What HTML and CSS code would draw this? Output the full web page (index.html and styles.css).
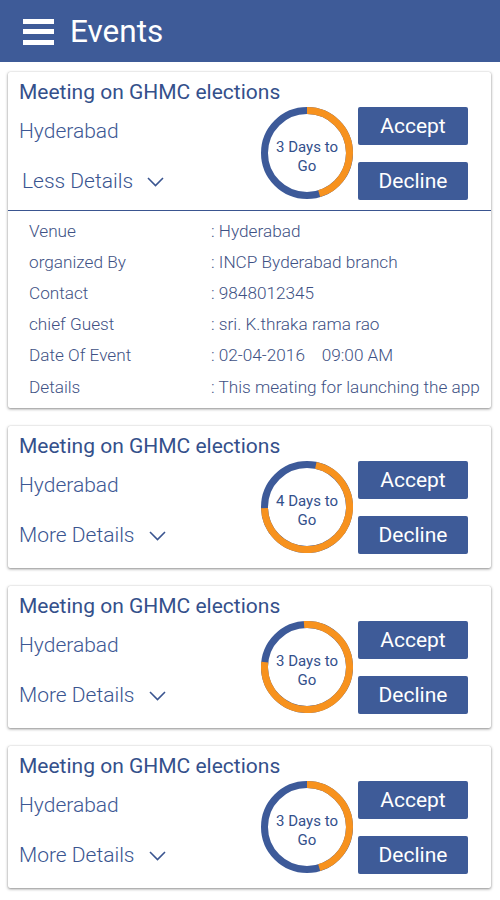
FILE: index.html
```html
<!DOCTYPE html>
<html>
<head>
<meta charset="utf-8">
<link rel="stylesheet" href="styles.css">
</head>
<body>
<header class="appbar">
  <span class="hamburger"><span></span><span></span><span></span></span>
  <h1 class="appbar-title">Events</h1>
</header>
<main class="list">
  <section class="card">
    <div class="card-top expanded">
      <h2 class="card-title">Meeting on GHMC elections</h2>
      <div class="card-body">
        <div class="card-left">
          <div class="city">Hyderabad</div>
          <div class="toggle less">Less Details
            <svg class="chev" width="17" height="10" viewBox="0 0 17 10"><path d="M1 1 L8.5 8.5 L16 1" fill="none" stroke="#3a5590" stroke-width="1.6"/></svg>
          </div>
        </div>
        <div class="ring">
          <svg width="92" height="92" viewBox="0 0 92 92">
            <circle cx="46" cy="46" r="42.5" fill="none" stroke="#3d5a99" stroke-width="7"/>
            <circle cx="46" cy="46" r="42.5" fill="none" stroke="#f7921e" stroke-width="7" stroke-dasharray="120.9 400" transform="rotate(-90 46 46)"/>
          </svg>
          <span class="ring-text">3 Days to<br>Go</span>
        </div>
        <div class="actions">
          <button class="btn">Accept</button>
          <button class="btn">Decline</button>
        </div>
      </div>
    </div>
    <dl class="details">
      <div class="row"><dt>Venue</dt><dd>: Hyderabad</dd></div>
      <div class="row"><dt>organized By</dt><dd>: INCP Byderabad branch</dd></div>
      <div class="row"><dt>Contact</dt><dd>: 9848012345</dd></div>
      <div class="row"><dt>chief Guest</dt><dd>: sri. K.thraka rama rao</dd></div>
      <div class="row"><dt>Date Of Event</dt><dd>: 02-04-2016&nbsp;&nbsp;&nbsp; 09:00 AM</dd></div>
      <div class="row"><dt>Details</dt><dd>: This meating for launching the app</dd></div>
    </dl>
  </section>

  <section class="card">
    <div class="card-top">
      <h2 class="card-title">Meeting on GHMC elections</h2>
      <div class="card-body">
        <div class="card-left">
          <div class="city">Hyderabad</div>
          <div class="toggle">More Details
            <svg class="chev" width="17" height="10" viewBox="0 0 17 10"><path d="M1 1 L8.5 8.5 L16 1" fill="none" stroke="#3a5590" stroke-width="1.6"/></svg>
          </div>
        </div>
        <div class="ring">
          <svg width="92" height="92" viewBox="0 0 92 92">
            <circle cx="46" cy="46" r="42.5" fill="none" stroke="#3d5a99" stroke-width="7"/>
            <circle cx="46" cy="46" r="42.5" fill="none" stroke="#f7921e" stroke-width="7" stroke-dasharray="189.9 400" transform="rotate(-78 46 46)"/>
          </svg>
          <span class="ring-text">4 Days to<br>Go</span>
        </div>
        <div class="actions">
          <button class="btn">Accept</button>
          <button class="btn">Decline</button>
        </div>
      </div>
    </div>
  </section>

  <section class="card">
    <div class="card-top">
      <h2 class="card-title">Meeting on GHMC elections</h2>
      <div class="card-body">
        <div class="card-left">
          <div class="city">Hyderabad</div>
          <div class="toggle">More Details
            <svg class="chev" width="17" height="10" viewBox="0 0 17 10"><path d="M1 1 L8.5 8.5 L16 1" fill="none" stroke="#3a5590" stroke-width="1.6"/></svg>
          </div>
        </div>
        <div class="ring">
          <svg width="92" height="92" viewBox="0 0 92 92">
            <circle cx="46" cy="46" r="42.5" fill="none" stroke="#3d5a99" stroke-width="7"/>
            <circle cx="46" cy="46" r="42.5" fill="none" stroke="#f7921e" stroke-width="7" stroke-dasharray="207.7 400" transform="rotate(-94 46 46)"/>
          </svg>
          <span class="ring-text">3 Days to<br>Go</span>
        </div>
        <div class="actions">
          <button class="btn">Accept</button>
          <button class="btn">Decline</button>
        </div>
      </div>
    </div>
  </section>

  <section class="card">
    <div class="card-top">
      <h2 class="card-title">Meeting on GHMC elections</h2>
      <div class="card-body">
        <div class="card-left">
          <div class="city">Hyderabad</div>
          <div class="toggle">More Details
            <svg class="chev" width="17" height="10" viewBox="0 0 17 10"><path d="M1 1 L8.5 8.5 L16 1" fill="none" stroke="#3a5590" stroke-width="1.6"/></svg>
          </div>
        </div>
        <div class="ring">
          <svg width="92" height="92" viewBox="0 0 92 92">
            <circle cx="46" cy="46" r="42.5" fill="none" stroke="#3d5a99" stroke-width="7"/>
            <circle cx="46" cy="46" r="42.5" fill="none" stroke="#f7921e" stroke-width="7" stroke-dasharray="120.9 400" transform="rotate(-90 46 46)"/>
          </svg>
          <span class="ring-text">3 Days to<br>Go</span>
        </div>
        <div class="actions">
          <button class="btn">Accept</button>
          <button class="btn">Decline</button>
        </div>
      </div>
    </div>
  </section>
</main>
</body>
</html>
```

FILE: styles.css
```css
* { box-sizing: border-box; }
html, body { margin: 0; padding: 0; background: #ffffff; }
body {
  font-family: Roboto, "Noto Sans", "Liberation Sans", sans-serif;
  color: #34508c;
  width: 500px;
}
.appbar {
  height: 62px;
  background: #3e5b98;
  display: flex;
  align-items: center;
  padding-left: 23px;
}
.hamburger {
  display: flex;
  flex-direction: column;
  gap: 5.5px;
  width: 31px;
  margin-right: 16px;
  margin-top: 1px;
}
.hamburger span {
  display: block;
  height: 5px;
  background: #ffffff;
}
.appbar-title {
  margin: 0;
  font-size: 31.5px;
  font-weight: 400;
  color: #ffffff;
}
.list {
  display: flex;
  flex-direction: column;
  gap: 18px;
  padding: 10px 9px 12px 8px;
}
.card {
  background: #ffffff;
  border-radius: 2px;
  box-shadow: 0 1px 3px rgba(0,0,0,0.45), 0 0 1px rgba(0,0,0,0.2);
}
.card-top {
  padding: 8px 23px 14px 11px;
}
.card-top.expanded {
  padding-bottom: 10px;
  border-bottom: 1.5px solid #3a5590;
}
.card-title {
  margin: 0;
  font-size: 21px;
  font-weight: 400;
  line-height: 24px;
  color: #34508b;
  white-space: nowrap;
}
.card-body {
  display: flex;
  align-items: flex-start;
  margin-top: 3px;
}
.card-left {
  flex: 1;
  display: flex;
  flex-direction: column;
}
.city {
  font-size: 21px;
  font-weight: 300;
  line-height: 24px;
  margin-top: 12px;
  color: #3d5894;
}
.toggle {
  display: flex;
  align-items: center;
  font-size: 21px;
  font-weight: 300;
  line-height: 26px;
  margin-top: 25px;
  color: #3a5590;
}
.toggle.less { margin-left: 3px; }
.chev { margin-left: 14px; margin-top: 2px; }
.ring {
  width: 92px;
  height: 92px;
  position: relative;
  display: flex;
  align-items: center;
  justify-content: center;
  padding-top: 7px;
  margin-right: 5px;
}
.ring svg { position: absolute; left: 0; top: 0; }
.ring-text {
  position: relative;
  font-size: 15px;
  line-height: 19px;
  text-align: center;
  color: #33508b;
}
.actions {
  display: flex;
  flex-direction: column;
  gap: 17px;
}
.btn {
  width: 110px;
  height: 38px;
  border: none;
  border-radius: 2px;
  background: #3e5b98;
  color: #ffffff;
  font-family: Roboto, "Noto Sans", "Liberation Sans", sans-serif;
  font-size: 21px;
  font-weight: 400;
  padding: 0;
}
.details {
  margin: 0;
  padding: 4px 8px 6px 21px;
}
.row {
  display: flex;
  height: 31.2px;
  align-items: center;
  font-size: 17.2px;
  font-weight: 300;
  color: #3e5184;
}
.row dt { width: 182px; flex: none; }
.row dd { margin: 0; white-space: nowrap; }
```
